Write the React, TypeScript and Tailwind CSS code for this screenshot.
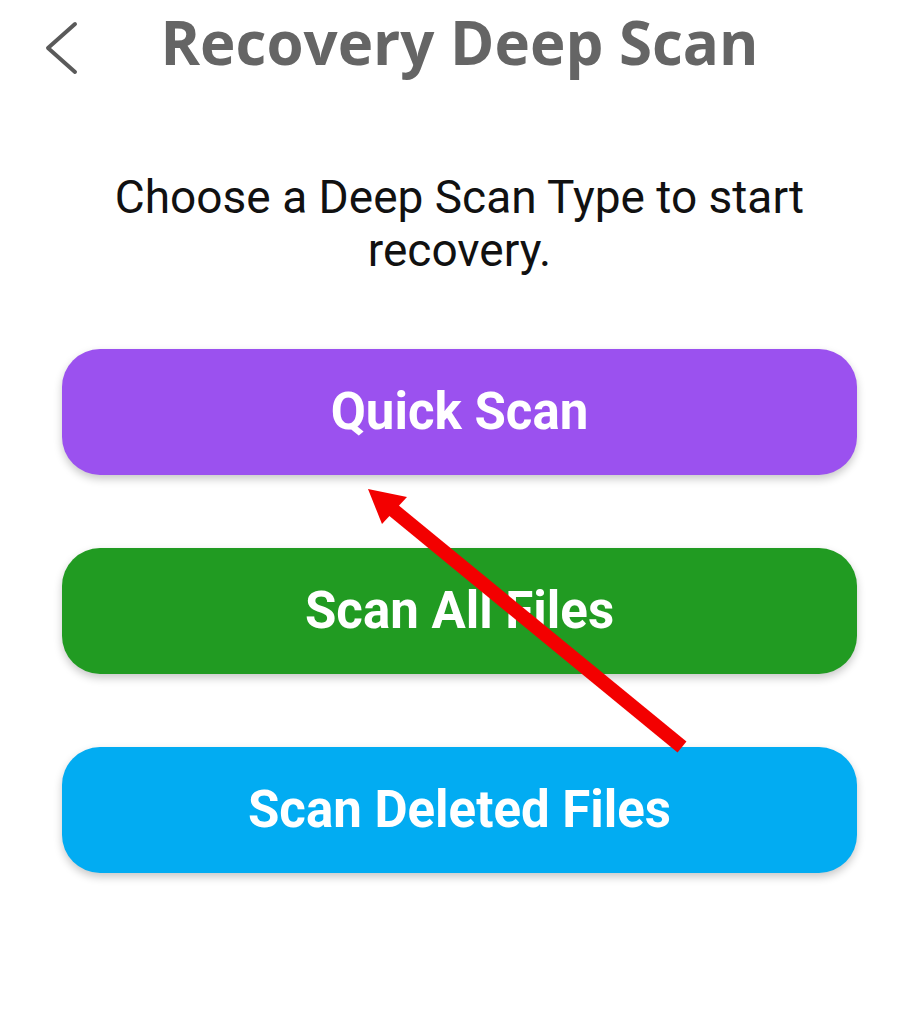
import React from "react";

interface ScanOption {
  label: string;
  color: string;
}

const options: ScanOption[] = [
  { label: "Quick Scan", color: "bg-[#9b51ef]" },
  { label: "Scan All Files", color: "bg-[#219b22]" },
  { label: "Scan Deleted Files", color: "bg-[#02acf2]" },
];

const BackChevron = () => (
  <svg width="36" height="54" viewBox="0 0 36 54" fill="none">
    <path
      d="M31 3 L4 27 L31 51"
      stroke="#5a5a5a"
      strokeWidth="4"
      strokeLinecap="round"
      strokeLinejoin="round"
    />
  </svg>
);

const RedArrow = () => (
  <svg
    className="absolute inset-0 pointer-events-none"
    width="919"
    height="1024"
    viewBox="0 0 919 1024"
  >
    <line x1="682" y1="747" x2="392" y2="509" stroke="#f30000" strokeWidth="14" />
    <polygon points="368,489 407,497 382,524" fill="#f30000" />
  </svg>
);

const App = () => {
  return (
    <div className="relative w-full h-[1024px] bg-white overflow-hidden">
      <header className="flex items-start pt-px">
        <div className="w-[120px] pl-[44px] pt-[20px]">
          <BackChevron />
        </div>
        <h1
          className="flex-1 text-center text-[60px] leading-[83px] font-bold text-[#656565]"
          style={{ fontFamily: '"Open Sans", sans-serif' }}
        >
          Recovery Deep Scan
        </h1>
        <div className="w-[120px]" />
      </header>

      <p
        className="mt-[87px] px-10 text-center text-[46px] leading-[53px] text-[#111]"
        style={{ fontFamily: "Roboto, sans-serif" }}
      >
        Choose a Deep Scan Type to start
        <br />
        recovery.
      </p>

      <div className="mt-[72px] px-[62px] flex flex-col gap-[73px]">
        {options.map((opt) => (
          <button
            key={opt.label}
            className={`${opt.color} h-[126px] w-full rounded-[38px] shadow-[0_4px_8px_rgba(0,0,0,0.22)] flex items-center justify-center text-white text-[51px] font-bold`}
            style={{ fontFamily: "Roboto, sans-serif" }}
          >
            {opt.label}
          </button>
        ))}
      </div>

      <RedArrow />
    </div>
  );
};

export default App;
